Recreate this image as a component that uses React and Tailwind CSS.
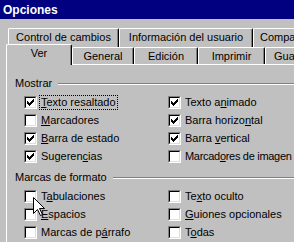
import React from 'react';

const Check = () => (
  <svg width="7" height="7" viewBox="0 0 7 7" shapeRendering="crispEdges" className="ml-[1px] mt-[1px] block">
    <path
      fill="#000"
      d="M6 0h1v1h-1z M5 1h2v1h-2z M0 2h1v1h-1z M4 2h3v1h-3z M0 3h2v1h-2z M3 3h3v1h-3z M0 4h5v1h-5z M1 5h3v1h-3z M2 6h1v1h-1z"
    />
  </svg>
);

const Box = ({ checked }) => (
  <span className="block h-[13px] w-[13px] shrink-0 border border-t-[#808080] border-l-[#808080] border-r-white border-b-white">
    <span className="block h-full w-full border border-t-black border-l-black border-r-[#dfdfdf] border-b-[#dfdfdf] bg-white">
      {checked && <Check />}
    </span>
  </span>
);

const Option = ({ checked, label, u, focus, tight }) => (
  <div className="flex h-[18px] items-center">
    <Box checked={checked} />
    <span
      className={
        'ml-[2px] whitespace-nowrap border px-[1px] leading-[13px] ' +
        (focus ? 'border-dotted border-black' : 'border-transparent') +
        (tight ? ' tracking-[-0.3px]' : '')
      }
    >
      {label.slice(0, u)}
      <u className="underline-offset-[1px]">{label[u]}</u>
      {label.slice(u + 1)}
    </span>
  </div>
);

const Header = ({ children }) => (
  <div className="flex h-[13px] items-center pl-[8px]">
    <span className="whitespace-nowrap leading-[13px]">{children}</span>
    <div className="ml-[6px] h-0 flex-1 border-t border-b border-t-[#808080] border-b-white" />
  </div>
);

const Tab = ({ w, children, className = '' }) => (
  <div
    className={
      'shrink-0 overflow-hidden whitespace-nowrap rounded-t-[2px] border-l border-t border-r border-l-white border-t-white border-r-black bg-[#c0c0c0] text-center leading-[13px] shadow-[inset_-1px_0_#808080] ' +
      className
    }
    style={{ width: w }}
  >
    {children}
  </div>
);

const mostrar = [
  [true, 'Texto resaltado', 0, true],
  [true, 'Texto animado', 7],
  [false, 'Marcadores', 0],
  [true, 'Barra horizontal', 12],
  [true, 'Barra de estado', 0],
  [true, 'Barra vertical', 6],
  [true, 'Sugerencias', 7],
  [false, 'Marcadores de imagen', 6, false, true],
];

const marcas = [
  [false, 'Tabulaciones', 1],
  [false, 'Texto oculto', 2],
  [false, 'Espacios', 0],
  [false, 'Guiones opcionales', 0],
  [false, 'Marcas de párrafo', 11],
  [false, 'Todas', 1],
];

export default function App() {
  return (
    <div className="relative h-[242px] w-[294px] overflow-hidden bg-[#c0c0c0] font-['Liberation_Sans',Arial,sans-serif] text-[11px] text-black">
      <div className="h-[19px] bg-[#000080] pl-[3px] pt-[4px] text-[12px] font-bold leading-[13px] text-white">
        Opciones
      </div>

      <div className="w-[330px] pl-[6px] pt-[9px]">
        {/* back row of tabs */}
        <div className="flex h-[19px] pl-[2px]">
          <Tab w={111} className="h-[19px] pt-[2px]">Control de cambios</Tab>
          <Tab w={134} className="h-[19px] pt-[2px]">Información del usuario</Tab>
          <Tab w={80} className="h-[19px] pt-[2px] text-left pl-[6px]">Compatibilidad</Tab>
        </div>

        {/* front row of tabs */}
        <div className="relative z-10 -mt-[3px] flex h-[21px] items-start">
          <Tab w={66} className="h-[21px] pt-[2px]">Ver</Tab>
          <Tab w={62} className="mt-[3px] h-[17px] pt-[2px]">General</Tab>
          <Tab w={64} className="mt-[3px] h-[17px] pt-[2px]">Edición</Tab>
          <Tab w={67} className="mt-[3px] h-[17px] pt-[2px]">Imprimir</Tab>
          <Tab w={70} className="mt-[3px] h-[17px] pt-[2px] text-left pl-[8px]">Guardar</Tab>
        </div>

        {/* page */}
        <div className="-mt-[1px] h-[200px] border-l border-t border-white pt-[12px]">
          <Header>Mostrar</Header>
          <div className="mt-[3px] grid grid-cols-[144px_1fr] pl-[17px]">
            {mostrar.map(([c, l, u, f, t]) => (
              <Option key={l} checked={c} label={l} u={u} focus={f} tight={t} />
            ))}
          </div>

          <div className="mt-[6px]">
            <Header>Marcas de formato</Header>
          </div>
          <div className="mt-[3px] grid grid-cols-[144px_1fr] pl-[17px]">
            {marcas.map(([c, l, u]) => (
              <Option key={l} checked={c} label={l} u={u} />
            ))}
          </div>
        </div>
      </div>

      {/* mouse pointer */}
      <svg width="13" height="20" viewBox="0 0 13 20" className="absolute left-[33px] top-[197px] z-20">
        <path d="M0.5 0.5V16.5L4.5 12.5L7.5 18.5L9.5 17.5L6.5 11.5H11.5Z" fill="#fff" stroke="#000" strokeWidth="1" />
      </svg>
    </div>
  );
}
